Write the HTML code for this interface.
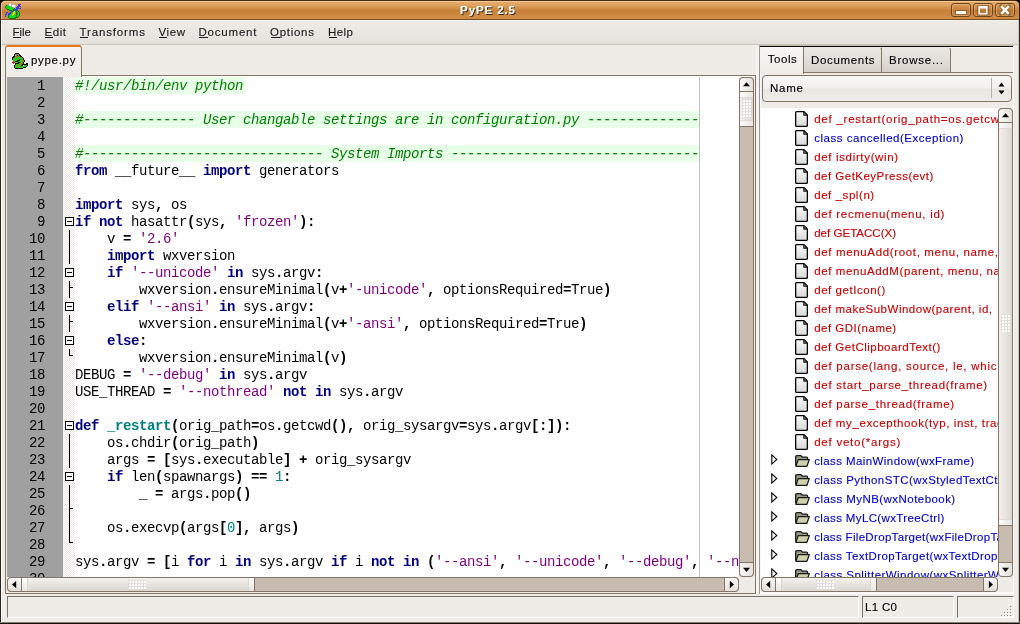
<!DOCTYPE html>
<html>
<head>
<meta charset="utf-8">
<title>PyPE 2.5</title>
<style>
html,body{margin:0;padding:0;}
body{width:1020px;height:624px;overflow:hidden;background:#efebe7;font-family:"Liberation Sans",sans-serif;font-size:12px;color:#000;position:relative;}
div,span,svg{box-sizing:border-box;}
.a{position:absolute;}
#win{position:absolute;left:0;top:0;width:1020px;height:624px;background:#efebe7;overflow:hidden;will-change:transform;}
#title{left:0;top:0;width:1020px;height:20px;background:linear-gradient(#4a3018 0px,#4a3018 1px,#f8cc98 1px,#f4c690 2px,#e3a867 2.2px,#e0a463 4.5px,#d5934c 8px,#c78139 10.5px,#c8833b 12.5px,#cf8a43 16px,#d38e46 18.4px,#b57a3a 19px,#7c5428 19px,#7c5428 20px);}
.wb{position:absolute;top:3px;width:20px;height:14px;border:1px solid #6f461c;border-radius:3px;background:linear-gradient(#dc9b5c,#c98540 45%,#bd7530 50%,#c88440);box-shadow:inset 0 0 0 1px rgba(255,225,190,.30);}
#menu{left:1px;top:20px;width:1018px;height:25px;background:linear-gradient(#f6f4f2 0,#eeebe7 1px,#eae7e3 50%,#e3dfdb 24px,#cdc4ba 24px,#cdc4ba 25px);}
.ul{position:absolute;height:1px;background:#1a1a1a;}
#ed{left:7px;top:77px;width:732px;height:500px;background:#fff;overflow:hidden;}
#gut{left:0;top:0;width:56px;height:500px;background:#a0a0a0;}
#fold{left:56px;top:0;width:12px;height:500px;background:conic-gradient(#ece8e3 25%,#fff 0 50%,#ece8e3 0 75%,#fff 0) 0 0/2px 2px;}
.cl{position:absolute;left:68px;height:17px;line-height:17px;white-space:pre;font-family:"Liberation Mono",monospace;font-size:14px;letter-spacing:-0.4016px;color:#000;}
.cb{position:absolute;left:68px;height:17px;background:#e8ffe8;}
.k{font-weight:bold;color:#00007f;}
.s{color:#7f007f;}
.n{color:#007f7f;}
.o{font-weight:bold;color:#000;}
.d{font-weight:bold;color:#007f7f;}
.c{color:#007f00;font-style:italic;}
#edge{left:692px;top:0;width:1px;height:500px;background:#c0c0c0;}
.sbb{position:absolute;width:14px;height:14px;border:1px solid #8b7b69;border-radius:3px;background:linear-gradient(#fbfaf9,#eeebe7 50%,#e2ded9);}
.tr{position:absolute;background:#c9bdb0;border:1px solid #8b7b69;}
.th{position:absolute;border:1px solid #8b7b69;background:#efebe7;}
.fo{position:absolute;background:#000;}
</style>
</head>
<body>
<div id="win">
<div id="title" class="a"></div>
<div class="a" style="left:460.10px;top:-0.5px;font-size:11.5px;line-height:20px;height:20px;letter-spacing:0.887px;color:#fff;-webkit-text-stroke:0.12px #fff;white-space:pre;font-weight:bold;text-shadow:1px 1px 0 #3c2812;">PyPE 2.5</div>
<div class="wb" style="left:951px"></div>
<div class="wb" style="left:973px"></div>
<div class="wb" style="left:995px"></div>
<div class="a" style="left:956px;top:11px;width:10px;height:3px;background:#fff;box-shadow:0 0 0 1px rgba(110,65,20,.4)"></div>
<svg class="a" style="left:977px;top:5px" width="12" height="11" viewBox="0 0 12 11"><rect x="1" y="1" width="10" height="9" fill="none" stroke="#6e4114" stroke-opacity=".4" stroke-width="3.6"/><path d="M1.4 1 H10.6 V9.6 H1.4 Z M3 3.6 V8 H9 V3.6 Z" fill="#fff" fill-rule="evenodd"/></svg>
<svg class="a" style="left:999px;top:4px" width="12" height="12" viewBox="0 0 12 12"><path d="M2 2 L10 10 M10 2 L2 10" stroke="#6e4114" stroke-opacity=".45" stroke-width="4.4" stroke-linecap="square"/><path d="M2.2 2.2 L9.8 9.8 M9.8 2.2 L2.2 9.8" stroke="#fff" stroke-width="2.6" stroke-linecap="butt"/></svg>
<svg class="a" style="left:5px;top:3px" width="16" height="16" viewBox="0 0 16 16" shape-rendering="crispEdges"><rect x="4" y="0" width="2" height="1" fill="#b8b8b8"/><rect x="3" y="1" width="1" height="1" fill="#b8b8b8"/><rect x="4" y="1" width="2" height="1" fill="#ffffff"/><rect x="6" y="1" width="1" height="1" fill="#b8b8b8"/><rect x="8" y="1" width="2" height="1" fill="#b8b8b8"/><rect x="13" y="1" width="3" height="1" fill="#3c3ce4"/><rect x="1" y="2" width="1" height="1" fill="#0a7a0a"/><rect x="2" y="2" width="2" height="1" fill="#10d810"/><rect x="4" y="2" width="2" height="1" fill="#ffffff"/><rect x="6" y="2" width="1" height="1" fill="#b8b8b8"/><rect x="7" y="2" width="3" height="1" fill="#ffffff"/><rect x="10" y="2" width="1" height="1" fill="#b8b8b8"/><rect x="13" y="2" width="2" height="1" fill="#3c3ce4"/><rect x="0" y="3" width="1" height="1" fill="#0a7a0a"/><rect x="1" y="3" width="4" height="1" fill="#10d810"/><rect x="5" y="3" width="2" height="1" fill="#b8b8b8"/><rect x="7" y="3" width="3" height="1" fill="#ffffff"/><rect x="10" y="3" width="1" height="1" fill="#b8b8b8"/><rect x="12" y="3" width="4" height="1" fill="#3c3ce4"/><rect x="0" y="4" width="1" height="1" fill="#0a7a0a"/><rect x="1" y="4" width="7" height="1" fill="#10d810"/><rect x="8" y="4" width="2" height="1" fill="#b8b8b8"/><rect x="11" y="4" width="3" height="1" fill="#3c3ce4"/><rect x="1" y="5" width="1" height="1" fill="#0a7a0a"/><rect x="2" y="5" width="7" height="1" fill="#10d810"/><rect x="9" y="5" width="1" height="1" fill="#0a7a0a"/><rect x="11" y="5" width="5" height="1" fill="#3c3ce4"/><rect x="2" y="6" width="2" height="1" fill="#0a7a0a"/><rect x="4" y="6" width="4" height="1" fill="#10d810"/><rect x="8" y="6" width="1" height="1" fill="#0a7a0a"/><rect x="9" y="6" width="4" height="1" fill="#3c3ce4"/><rect x="4" y="7" width="3" height="1" fill="#0a7a0a"/><rect x="7" y="7" width="1" height="1" fill="#10d810"/><rect x="8" y="7" width="2" height="1" fill="#3c3ce4"/><rect x="10" y="7" width="1" height="1" fill="#0a7a0a"/><rect x="11" y="7" width="1" height="1" fill="#3c3ce4"/><rect x="12" y="7" width="1" height="1" fill="#0a7a0a"/><rect x="6" y="8" width="2" height="1" fill="#3c3ce4"/><rect x="8" y="8" width="1" height="1" fill="#10d810"/><rect x="9" y="8" width="1" height="1" fill="#f4f000"/><rect x="10" y="8" width="1" height="1" fill="#10d810"/><rect x="11" y="8" width="1" height="1" fill="#0a7a0a"/><rect x="12" y="8" width="1" height="1" fill="#10d810"/><rect x="13" y="8" width="1" height="1" fill="#0a7a0a"/><rect x="1" y="9" width="2" height="1" fill="#3c3ce4"/><rect x="5" y="9" width="2" height="1" fill="#3c3ce4"/><rect x="7" y="9" width="1" height="1" fill="#10d810"/><rect x="8" y="9" width="2" height="1" fill="#f4f000"/><rect x="10" y="9" width="1" height="1" fill="#10d810"/><rect x="11" y="9" width="1" height="1" fill="#0a7a0a"/><rect x="12" y="9" width="1" height="1" fill="#8a5a28"/><rect x="13" y="9" width="1" height="1" fill="#10d810"/><rect x="14" y="9" width="1" height="1" fill="#0a7a0a"/><rect x="1" y="10" width="1" height="1" fill="#3c3ce4"/><rect x="2" y="10" width="1" height="1" fill="#7878ec"/><rect x="3" y="10" width="3" height="1" fill="#3c3ce4"/><rect x="6" y="10" width="2" height="1" fill="#10d810"/><rect x="8" y="10" width="2" height="1" fill="#f4f000"/><rect x="10" y="10" width="1" height="1" fill="#10d810"/><rect x="11" y="10" width="1" height="1" fill="#0a7a0a"/><rect x="12" y="10" width="1" height="1" fill="#8a5a28"/><rect x="13" y="10" width="1" height="1" fill="#10d810"/><rect x="14" y="10" width="1" height="1" fill="#0a7a0a"/><rect x="0" y="11" width="2" height="1" fill="#3c3ce4"/><rect x="3" y="11" width="2" height="1" fill="#3c3ce4"/><rect x="5" y="11" width="2" height="1" fill="#10d810"/><rect x="7" y="11" width="2" height="1" fill="#f4f000"/><rect x="9" y="11" width="2" height="1" fill="#10d810"/><rect x="11" y="11" width="1" height="1" fill="#0a7a0a"/><rect x="12" y="11" width="1" height="1" fill="#8a5a28"/><rect x="13" y="11" width="1" height="1" fill="#10d810"/><rect x="14" y="11" width="1" height="1" fill="#0a7a0a"/><rect x="0" y="12" width="1" height="1" fill="#3c3ce4"/><rect x="1" y="12" width="1" height="1" fill="#7878ec"/><rect x="3" y="12" width="1" height="1" fill="#3c3ce4"/><rect x="4" y="12" width="3" height="1" fill="#10d810"/><rect x="7" y="12" width="1" height="1" fill="#f4f000"/><rect x="8" y="12" width="3" height="1" fill="#10d810"/><rect x="11" y="12" width="1" height="1" fill="#0a7a0a"/><rect x="12" y="12" width="2" height="1" fill="#10d810"/><rect x="14" y="12" width="1" height="1" fill="#0a7a0a"/><rect x="0" y="13" width="1" height="1" fill="#3c3ce4"/><rect x="3" y="13" width="1" height="1" fill="#0a7a0a"/><rect x="4" y="13" width="7" height="1" fill="#10d810"/><rect x="11" y="13" width="1" height="1" fill="#0a7a0a"/><rect x="12" y="13" width="1" height="1" fill="#10d810"/><rect x="13" y="13" width="1" height="1" fill="#0a7a0a"/><rect x="3" y="14" width="1" height="1" fill="#0a7a0a"/><rect x="4" y="14" width="6" height="1" fill="#10d810"/><rect x="10" y="14" width="3" height="1" fill="#0a7a0a"/><rect x="4" y="15" width="7" height="1" fill="#0a7a0a"/></svg>
<div id="menu" class="a"></div>
<div class="a" style="left:12.50px;top:22.0px;font-size:11.5px;line-height:20px;height:20px;letter-spacing:-0.010px;color:#1a1a1a;-webkit-text-stroke:0.12px #1a1a1a;white-space:pre;">File</div>
<div class="ul" style="left:13.0px;top:37px;width:7.5px"></div>
<div class="a" style="left:44.50px;top:22.0px;font-size:11.5px;line-height:20px;height:20px;letter-spacing:0.557px;color:#1a1a1a;-webkit-text-stroke:0.12px #1a1a1a;white-space:pre;">Edit</div>
<div class="ul" style="left:45.0px;top:37px;width:8.2px"></div>
<div class="a" style="left:79.50px;top:22.0px;font-size:11.5px;line-height:20px;height:20px;letter-spacing:0.863px;color:#1a1a1a;-webkit-text-stroke:0.12px #1a1a1a;white-space:pre;">Transforms</div>
<div class="ul" style="left:80.0px;top:37px;width:7.5px"></div>
<div class="a" style="left:158.50px;top:22.0px;font-size:11.5px;line-height:20px;height:20px;letter-spacing:0.594px;color:#1a1a1a;-webkit-text-stroke:0.12px #1a1a1a;white-space:pre;">View</div>
<div class="ul" style="left:159.0px;top:37px;width:8.2px"></div>
<div class="a" style="left:198.50px;top:22.0px;font-size:11.5px;line-height:20px;height:20px;letter-spacing:0.797px;color:#1a1a1a;-webkit-text-stroke:0.12px #1a1a1a;white-space:pre;">Document</div>
<div class="ul" style="left:199.0px;top:37px;width:8.8px"></div>
<div class="a" style="left:270.00px;top:22.0px;font-size:11.5px;line-height:20px;height:20px;letter-spacing:0.727px;color:#1a1a1a;-webkit-text-stroke:0.12px #1a1a1a;white-space:pre;">Options</div>
<div class="ul" style="left:270.5px;top:37px;width:9.5px"></div>
<div class="a" style="left:328.00px;top:22.0px;font-size:11.5px;line-height:20px;height:20px;letter-spacing:0.448px;color:#1a1a1a;-webkit-text-stroke:0.12px #1a1a1a;white-space:pre;">Help</div>
<div class="ul" style="left:328.5px;top:37px;width:8.8px"></div>
<div class="a" style="left:1px;top:5px;width:1px;height:14px;background:#eebf8c"></div>
<div class="a" style="left:0;top:0;width:1px;height:624px;background:#2a241e"></div><div class="a" style="left:1px;top:20px;width:1px;height:602px;background:#fbfaf9"></div>
<div class="a" style="left:1019px;top:0;width:1px;height:624px;background:#2a241e"></div><div class="a" style="left:1018px;top:20px;width:1px;height:602px;background:#cfc9c1"></div>
<div class="a" style="left:0;top:622px;width:1020px;height:1px;background:#857e75"></div><div class="a" style="left:0;top:623px;width:1020px;height:1px;background:#14110e"></div>
<svg class="a" style="left:0;top:0" width="6" height="6" viewBox="0 0 6 6"><path d="M0 0 H5.2 L3.4 1 L2.2 2 L1.4 3 L1 4.2 V5.2 H0 Z" fill="#050403"/><path d="M5.2 1 L3.6 1.9 L2.4 3 L1.9 4.2 L1.9 5.5 L1.1 5.5 L1.1 4.2 L1.5 3 L2.3 2 L3.4 1 Z" fill="#f0c696"/></svg>
<svg class="a" style="left:1014px;top:0" width="6" height="6" viewBox="0 0 6 6"><g transform="translate(6,0) scale(-1,1)"><path d="M0 0 H5.2 L3.4 1 L2.2 2 L1.4 3 L1 4.2 V5.2 H0 Z" fill="#050403"/><path d="M5.2 1 L3.6 1.9 L2.4 3 L1.9 4.2 L1.9 5.5 L1.1 5.5 L1.1 4.2 L1.5 3 L2.3 2 L3.4 1 Z" fill="#d8a26a"/></g></svg>
<div class="a" style="left:5px;top:75px;width:751px;height:519px;border:1px solid #857563"></div>
<div class="a" style="left:6px;top:76px;width:749px;height:1px;background:#fff"></div>
<div class="a" style="left:5px;top:45px;width:77px;height:32px;border:1px solid #857563;border-bottom:none;border-radius:4px 4px 0 0;background:linear-gradient(#f6f4f2,#efebe7)"></div>
<div class="a" style="left:6px;top:45px;width:75px;height:2px;background:#e8771c;border-radius:3px 3px 0 0"></div>
<div class="a" style="left:30.90px;top:50.4px;font-size:11.5px;line-height:20px;height:20px;letter-spacing:0.720px;color:#000;-webkit-text-stroke:0.12px #000;white-space:pre;">pype.py</div>
<svg class="a" style="left:12px;top:53px" width="16" height="16" viewBox="0 0 16 16" shape-rendering="crispEdges"><rect x="3" y="0" width="4" height="1" fill="#0a0a0a"/><rect x="2" y="1" width="1" height="1" fill="#0a0a0a"/><rect x="3" y="1" width="4" height="1" fill="#8a8a18"/><rect x="7" y="1" width="1" height="1" fill="#0a0a0a"/><rect x="2" y="2" width="1" height="1" fill="#0a0a0a"/><rect x="3" y="2" width="1" height="1" fill="#9a9a9a"/><rect x="4" y="2" width="1" height="1" fill="#8a8a18"/><rect x="5" y="2" width="1" height="1" fill="#1818f0"/><rect x="6" y="2" width="1" height="1" fill="#8a8a18"/><rect x="7" y="2" width="2" height="1" fill="#0a0a0a"/><rect x="1" y="3" width="2" height="1" fill="#0a0a0a"/><rect x="3" y="3" width="5" height="1" fill="#8a8a18"/><rect x="8" y="3" width="2" height="1" fill="#0a0a0a"/><rect x="0" y="4" width="2" height="1" fill="#0a0a0a"/><rect x="2" y="4" width="4" height="1" fill="#8a8a18"/><rect x="6" y="4" width="2" height="1" fill="#18d418"/><rect x="8" y="4" width="2" height="1" fill="#8a8a18"/><rect x="10" y="4" width="1" height="1" fill="#0a0a0a"/><rect x="0" y="5" width="1" height="1" fill="#0a0a0a"/><rect x="1" y="5" width="8" height="1" fill="#18d418"/><rect x="9" y="5" width="2" height="1" fill="#8a8a18"/><rect x="11" y="5" width="1" height="1" fill="#0a0a0a"/><rect x="0" y="6" width="1" height="1" fill="#0a0a0a"/><rect x="1" y="6" width="6" height="1" fill="#18d418"/><rect x="7" y="6" width="1" height="1" fill="#0a0a0a"/><rect x="8" y="6" width="2" height="1" fill="#18d418"/><rect x="10" y="6" width="1" height="1" fill="#8a8a18"/><rect x="11" y="6" width="1" height="1" fill="#0a0a0a"/><rect x="1" y="7" width="4" height="1" fill="#18d418"/><rect x="5" y="7" width="3" height="1" fill="#0a0a0a"/><rect x="8" y="7" width="2" height="1" fill="#18d418"/><rect x="10" y="7" width="2" height="1" fill="#8a8a18"/><rect x="12" y="7" width="1" height="1" fill="#0a0a0a"/><rect x="1" y="8" width="1" height="1" fill="#f01010"/><rect x="2" y="8" width="1" height="1" fill="#18d418"/><rect x="3" y="8" width="3" height="1" fill="#0a0a0a"/><rect x="6" y="8" width="1" height="1" fill="#0f8a0f"/><rect x="7" y="8" width="2" height="1" fill="#18d418"/><rect x="9" y="8" width="3" height="1" fill="#8a8a18"/><rect x="12" y="8" width="1" height="1" fill="#0a0a0a"/><rect x="0" y="9" width="3" height="1" fill="#f01010"/><rect x="3" y="9" width="3" height="1" fill="#18d418"/><rect x="6" y="9" width="2" height="1" fill="#0a0a0a"/><rect x="8" y="9" width="1" height="1" fill="#18d418"/><rect x="9" y="9" width="2" height="1" fill="#8a8a18"/><rect x="11" y="9" width="1" height="1" fill="#0a0a0a"/><rect x="1" y="10" width="1" height="1" fill="#f01010"/><rect x="3" y="10" width="4" height="1" fill="#0a0a0a"/><rect x="7" y="10" width="1" height="1" fill="#18d418"/><rect x="8" y="10" width="3" height="1" fill="#8a8a18"/><rect x="11" y="10" width="1" height="1" fill="#0a0a0a"/><rect x="14" y="10" width="2" height="1" fill="#0a0a0a"/><rect x="3" y="11" width="1" height="1" fill="#0a0a0a"/><rect x="4" y="11" width="3" height="1" fill="#18d418"/><rect x="7" y="11" width="3" height="1" fill="#8a8a18"/><rect x="10" y="11" width="6" height="1" fill="#0a0a0a"/><rect x="2" y="12" width="1" height="1" fill="#0a0a0a"/><rect x="3" y="12" width="2" height="1" fill="#18d418"/><rect x="5" y="12" width="4" height="1" fill="#8a8a18"/><rect x="9" y="12" width="2" height="1" fill="#0a0a0a"/><rect x="12" y="12" width="1" height="1" fill="#8a8a18"/><rect x="13" y="12" width="2" height="1" fill="#18d418"/><rect x="15" y="12" width="1" height="1" fill="#0a0a0a"/><rect x="2" y="13" width="1" height="1" fill="#0a0a0a"/><rect x="3" y="13" width="1" height="1" fill="#18d418"/><rect x="4" y="13" width="2" height="1" fill="#8a8a18"/><rect x="6" y="13" width="2" height="1" fill="#18d418"/><rect x="8" y="13" width="2" height="1" fill="#8a8a18"/><rect x="10" y="13" width="4" height="1" fill="#18d418"/><rect x="14" y="13" width="1" height="1" fill="#0a0a0a"/><rect x="2" y="14" width="1" height="1" fill="#0a0a0a"/><rect x="3" y="14" width="8" height="1" fill="#18d418"/><rect x="11" y="14" width="3" height="1" fill="#0a0a0a"/><rect x="3" y="15" width="8" height="1" fill="#0a0a0a"/></svg>
<div id="ed" class="a">
<div id="gut" class="a"></div><div id="fold" class="a"></div>
<div class="cb" style="top:0px;width:170px"></div>
<div class="cb" style="top:34px;width:624px"></div>
<div class="cb" style="top:68px;width:624px"></div>
<div class="cl" style="left:30px;top:1px">1</div>
<div class="cl" style="top:1px"><span class="c">#!/usr/bin/env python</span></div>
<div class="cl" style="left:30px;top:18px">2</div>
<div class="cl" style="left:30px;top:35px">3</div>
<div class="cl" style="top:35px"><span class="c">#-------------- User changable settings are in configuration.py --------------</span></div>
<div class="cl" style="left:30px;top:52px">4</div>
<div class="cl" style="left:30px;top:69px">5</div>
<div class="cl" style="top:69px"><span class="c">#------------------------------ System Imports -------------------------------</span></div>
<div class="cl" style="left:30px;top:86px">6</div>
<div class="cl" style="top:86px"><span class="k">from</span> __future__ <span class="k">import</span> generators</div>
<div class="cl" style="left:30px;top:103px">7</div>
<div class="cl" style="left:30px;top:120px">8</div>
<div class="cl" style="top:120px"><span class="k">import</span> sys<span class="o">,</span> os</div>
<div class="cl" style="left:30px;top:137px">9</div>
<div class="cl" style="top:137px"><span class="k">if</span> <span class="k">not</span> hasattr<span class="o">(</span>sys<span class="o">,</span> <span class="s">'frozen'</span><span class="o">):</span></div>
<div class="cl" style="left:22px;top:154px">10</div>
<div class="cl" style="top:154px">    v <span class="o">=</span> <span class="s">'2.6'</span></div>
<div class="cl" style="left:22px;top:171px">11</div>
<div class="cl" style="top:171px">    <span class="k">import</span> wxversion</div>
<div class="cl" style="left:22px;top:188px">12</div>
<div class="cl" style="top:188px">    <span class="k">if</span> <span class="s">'--unicode'</span> <span class="k">in</span> sys<span class="o">.</span>argv<span class="o">:</span></div>
<div class="cl" style="left:22px;top:205px">13</div>
<div class="cl" style="top:205px">        wxversion<span class="o">.</span>ensureMinimal<span class="o">(</span>v<span class="o">+</span><span class="s">'-unicode'</span><span class="o">,</span> optionsRequired<span class="o">=</span>True<span class="o">)</span></div>
<div class="cl" style="left:22px;top:222px">14</div>
<div class="cl" style="top:222px">    <span class="k">elif</span> <span class="s">'--ansi'</span> <span class="k">in</span> sys<span class="o">.</span>argv<span class="o">:</span></div>
<div class="cl" style="left:22px;top:239px">15</div>
<div class="cl" style="top:239px">        wxversion<span class="o">.</span>ensureMinimal<span class="o">(</span>v<span class="o">+</span><span class="s">'-ansi'</span><span class="o">,</span> optionsRequired<span class="o">=</span>True<span class="o">)</span></div>
<div class="cl" style="left:22px;top:256px">16</div>
<div class="cl" style="top:256px">    <span class="k">else</span><span class="o">:</span></div>
<div class="cl" style="left:22px;top:273px">17</div>
<div class="cl" style="top:273px">        wxversion<span class="o">.</span>ensureMinimal<span class="o">(</span>v<span class="o">)</span></div>
<div class="cl" style="left:22px;top:290px">18</div>
<div class="cl" style="top:290px">DEBUG <span class="o">=</span> <span class="s">'--debug'</span> <span class="k">in</span> sys<span class="o">.</span>argv</div>
<div class="cl" style="left:22px;top:307px">19</div>
<div class="cl" style="top:307px">USE_THREAD <span class="o">=</span> <span class="s">'--nothread'</span> <span class="k">not</span> <span class="k">in</span> sys<span class="o">.</span>argv</div>
<div class="cl" style="left:22px;top:324px">20</div>
<div class="cl" style="left:22px;top:341px">21</div>
<div class="cl" style="top:341px"><span class="k">def</span> <span class="d">_restart</span><span class="o">(</span>orig_path<span class="o">=</span>os<span class="o">.</span>getcwd<span class="o">(),</span> orig_sysargv<span class="o">=</span>sys<span class="o">.</span>argv<span class="o">[:]):</span></div>
<div class="cl" style="left:22px;top:358px">22</div>
<div class="cl" style="top:358px">    os<span class="o">.</span>chdir<span class="o">(</span>orig_path<span class="o">)</span></div>
<div class="cl" style="left:22px;top:375px">23</div>
<div class="cl" style="top:375px">    args <span class="o">=</span> <span class="o">[</span>sys<span class="o">.</span>executable<span class="o">]</span> <span class="o">+</span> orig_sysargv</div>
<div class="cl" style="left:22px;top:392px">24</div>
<div class="cl" style="top:392px">    <span class="k">if</span> len<span class="o">(</span>spawnargs<span class="o">)</span> <span class="o">==</span> <span class="n">1</span><span class="o">:</span></div>
<div class="cl" style="left:22px;top:409px">25</div>
<div class="cl" style="top:409px">        _ <span class="o">=</span> args<span class="o">.</span>pop<span class="o">()</span></div>
<div class="cl" style="left:22px;top:426px">26</div>
<div class="cl" style="left:22px;top:443px">27</div>
<div class="cl" style="top:443px">    os<span class="o">.</span>execvp<span class="o">(</span>args<span class="o">[</span><span class="n">0</span><span class="o">],</span> args<span class="o">)</span></div>
<div class="cl" style="left:22px;top:460px">28</div>
<div class="cl" style="left:22px;top:477px">29</div>
<div class="cl" style="top:477px">sys<span class="o">.</span>argv <span class="o">=</span> <span class="o">[</span>i <span class="k">for</span> i <span class="k">in</span> sys<span class="o">.</span>argv <span class="k">if</span> i <span class="k">not</span> <span class="k">in</span> <span class="o">(</span><span class="s">'--ansi'</span><span class="o">,</span> <span class="s">'--unicode'</span><span class="o">,</span> <span class="s">'--debug'</span><span class="o">,</span> <span class="s">'--nothread'</span><span class="o">)]</span></div>
<div class="cl" style="left:22px;top:494px">30</div>
<div id="edge" class="a"></div>
<div class="fo" style="left:58px;top:140px;width:9px;height:9px;border:1px solid #000;background:#fff"></div><div class="fo" style="left:60px;top:144px;width:5px;height:1px"></div>
<div class="fo" style="left:58px;top:191px;width:9px;height:9px;border:1px solid #000;background:#fff"></div><div class="fo" style="left:60px;top:195px;width:5px;height:1px"></div>
<div class="fo" style="left:58px;top:225px;width:9px;height:9px;border:1px solid #000;background:#fff"></div><div class="fo" style="left:60px;top:229px;width:5px;height:1px"></div>
<div class="fo" style="left:58px;top:259px;width:9px;height:9px;border:1px solid #000;background:#fff"></div><div class="fo" style="left:60px;top:263px;width:5px;height:1px"></div>
<div class="fo" style="left:58px;top:344px;width:9px;height:9px;border:1px solid #000;background:#fff"></div><div class="fo" style="left:60px;top:348px;width:5px;height:1px"></div>
<div class="fo" style="left:58px;top:395px;width:9px;height:9px;border:1px solid #000;background:#fff"></div><div class="fo" style="left:60px;top:399px;width:5px;height:1px"></div>
<div class="fo" style="left:62px;top:153px;width:1px;height:17px"></div>
<div class="fo" style="left:62px;top:170px;width:1px;height:17px"></div>
<div class="fo" style="left:62px;top:357px;width:1px;height:17px"></div>
<div class="fo" style="left:62px;top:374px;width:1px;height:17px"></div>
<div class="fo" style="left:62px;top:408px;width:1px;height:17px"></div>
<div class="fo" style="left:62px;top:442px;width:1px;height:17px"></div>
<div class="fo" style="left:62px;top:204px;width:1px;height:17px"></div><div class="fo" style="left:62px;top:210px;width:4px;height:1px"></div>
<div class="fo" style="left:62px;top:238px;width:1px;height:17px"></div><div class="fo" style="left:62px;top:244px;width:4px;height:1px"></div>
<div class="fo" style="left:62px;top:425px;width:1px;height:17px"></div><div class="fo" style="left:62px;top:431px;width:4px;height:1px"></div>
<div class="fo" style="left:62px;top:272px;width:1px;height:7px"></div><div class="fo" style="left:62px;top:278px;width:4px;height:1px"></div>
<div class="fo" style="left:62px;top:459px;width:1px;height:7px"></div><div class="fo" style="left:62px;top:465px;width:4px;height:1px"></div>
</div>
<div class="a" style="left:739px;top:77px;width:15px;height:500px;background:#c8bcb0;border:1px solid #85766a;border-radius:4px"></div><div class="a" style="left:739px;top:91px;width:15px;height:36px;border:1px solid #85766a;background:linear-gradient(90deg,#ffffff,#f3f1ee 50%,#e9e6e2)"></div><div class="a" style="left:740px;top:97px;width:13px;height:24px;background:linear-gradient(90deg,#f3f1ee,#e6e2dd 55%,#dcd7d1);border-top:1px solid #dcd7d1;border-bottom:1px solid #dcd7d1"></div><div class="a" style="left:743px;top:100px;width:2px;height:2px;background:#fdfcfc;box-shadow:-1px -1px 0 #dfdad4"></div><div class="a" style="left:746px;top:100px;width:2px;height:2px;background:#fdfcfc;box-shadow:-1px -1px 0 #dfdad4"></div><div class="a" style="left:749px;top:100px;width:2px;height:2px;background:#fdfcfc;box-shadow:-1px -1px 0 #dfdad4"></div><div class="a" style="left:743px;top:103px;width:2px;height:2px;background:#fdfcfc;box-shadow:-1px -1px 0 #dfdad4"></div><div class="a" style="left:746px;top:103px;width:2px;height:2px;background:#fdfcfc;box-shadow:-1px -1px 0 #dfdad4"></div><div class="a" style="left:749px;top:103px;width:2px;height:2px;background:#fdfcfc;box-shadow:-1px -1px 0 #dfdad4"></div><div class="a" style="left:743px;top:106px;width:2px;height:2px;background:#fdfcfc;box-shadow:-1px -1px 0 #dfdad4"></div><div class="a" style="left:746px;top:106px;width:2px;height:2px;background:#fdfcfc;box-shadow:-1px -1px 0 #dfdad4"></div><div class="a" style="left:749px;top:106px;width:2px;height:2px;background:#fdfcfc;box-shadow:-1px -1px 0 #dfdad4"></div><div class="a" style="left:743px;top:109px;width:2px;height:2px;background:#fdfcfc;box-shadow:-1px -1px 0 #dfdad4"></div><div class="a" style="left:746px;top:109px;width:2px;height:2px;background:#fdfcfc;box-shadow:-1px -1px 0 #dfdad4"></div><div class="a" style="left:749px;top:109px;width:2px;height:2px;background:#fdfcfc;box-shadow:-1px -1px 0 #dfdad4"></div><div class="a" style="left:743px;top:112px;width:2px;height:2px;background:#fdfcfc;box-shadow:-1px -1px 0 #dfdad4"></div><div class="a" style="left:746px;top:112px;width:2px;height:2px;background:#fdfcfc;box-shadow:-1px -1px 0 #dfdad4"></div><div class="a" style="left:749px;top:112px;width:2px;height:2px;background:#fdfcfc;box-shadow:-1px -1px 0 #dfdad4"></div><div class="a" style="left:743px;top:115px;width:2px;height:2px;background:#fdfcfc;box-shadow:-1px -1px 0 #dfdad4"></div><div class="a" style="left:746px;top:115px;width:2px;height:2px;background:#fdfcfc;box-shadow:-1px -1px 0 #dfdad4"></div><div class="a" style="left:749px;top:115px;width:2px;height:2px;background:#fdfcfc;box-shadow:-1px -1px 0 #dfdad4"></div><div class="a" style="left:739px;top:77px;width:15px;height:15px;border:1px solid #85766a;border-radius:4px 4px 0 0;background:linear-gradient(90deg,#fbfaf9,#efece8 50%,#e4e0db)"><svg class="a" style="left:0;top:0" width="13" height="13" viewBox="0 0 13 13"><polygon points="3,8.2 10,8.2 6.5,4.2" fill="#000"/></svg></div><div class="a" style="left:739px;top:562px;width:15px;height:15px;border:1px solid #85766a;border-radius:0 0 4px 4px;background:linear-gradient(90deg,#fbfaf9,#efece8 50%,#e4e0db)"><svg class="a" style="left:0;top:0" width="13" height="13" viewBox="0 0 13 13"><polygon points="3,4.8 10,4.8 6.5,9" fill="#000"/></svg></div>
<div class="a" style="left:7px;top:577px;width:732px;height:15px;background:#c8bcb0;border:1px solid #85766a;border-radius:4px"></div><div class="a" style="left:21px;top:577px;width:234px;height:15px;border:1px solid #85766a;background:linear-gradient(#ffffff,#f3f1ee 50%,#e9e6e2)"></div><div class="a" style="left:27px;top:578px;width:222px;height:13px;background:linear-gradient(#f3f1ee,#e6e2dd 55%,#dcd7d1);border-left:1px solid #dcd7d1;border-right:1px solid #dcd7d1"></div><div class="a" style="left:129px;top:581px;width:2px;height:2px;background:#fdfcfc;box-shadow:-1px -1px 0 #dfdad4"></div><div class="a" style="left:132px;top:581px;width:2px;height:2px;background:#fdfcfc;box-shadow:-1px -1px 0 #dfdad4"></div><div class="a" style="left:135px;top:581px;width:2px;height:2px;background:#fdfcfc;box-shadow:-1px -1px 0 #dfdad4"></div><div class="a" style="left:138px;top:581px;width:2px;height:2px;background:#fdfcfc;box-shadow:-1px -1px 0 #dfdad4"></div><div class="a" style="left:141px;top:581px;width:2px;height:2px;background:#fdfcfc;box-shadow:-1px -1px 0 #dfdad4"></div><div class="a" style="left:144px;top:581px;width:2px;height:2px;background:#fdfcfc;box-shadow:-1px -1px 0 #dfdad4"></div><div class="a" style="left:129px;top:584px;width:2px;height:2px;background:#fdfcfc;box-shadow:-1px -1px 0 #dfdad4"></div><div class="a" style="left:132px;top:584px;width:2px;height:2px;background:#fdfcfc;box-shadow:-1px -1px 0 #dfdad4"></div><div class="a" style="left:135px;top:584px;width:2px;height:2px;background:#fdfcfc;box-shadow:-1px -1px 0 #dfdad4"></div><div class="a" style="left:138px;top:584px;width:2px;height:2px;background:#fdfcfc;box-shadow:-1px -1px 0 #dfdad4"></div><div class="a" style="left:141px;top:584px;width:2px;height:2px;background:#fdfcfc;box-shadow:-1px -1px 0 #dfdad4"></div><div class="a" style="left:144px;top:584px;width:2px;height:2px;background:#fdfcfc;box-shadow:-1px -1px 0 #dfdad4"></div><div class="a" style="left:129px;top:587px;width:2px;height:2px;background:#fdfcfc;box-shadow:-1px -1px 0 #dfdad4"></div><div class="a" style="left:132px;top:587px;width:2px;height:2px;background:#fdfcfc;box-shadow:-1px -1px 0 #dfdad4"></div><div class="a" style="left:135px;top:587px;width:2px;height:2px;background:#fdfcfc;box-shadow:-1px -1px 0 #dfdad4"></div><div class="a" style="left:138px;top:587px;width:2px;height:2px;background:#fdfcfc;box-shadow:-1px -1px 0 #dfdad4"></div><div class="a" style="left:141px;top:587px;width:2px;height:2px;background:#fdfcfc;box-shadow:-1px -1px 0 #dfdad4"></div><div class="a" style="left:144px;top:587px;width:2px;height:2px;background:#fdfcfc;box-shadow:-1px -1px 0 #dfdad4"></div><div class="a" style="left:7px;top:577px;width:15px;height:15px;border:1px solid #85766a;border-radius:4px 0 0 4px;background:linear-gradient(#fbfaf9,#efece8 50%,#e4e0db)"><svg class="a" style="left:0;top:0" width="13" height="13" viewBox="0 0 13 13"><polygon points="8.2,2.8 8.2,10.2 4,6.5" fill="#000"/></svg></div><div class="a" style="left:724px;top:577px;width:15px;height:15px;border:1px solid #85766a;border-radius:0 4px 4px 0;background:linear-gradient(#fbfaf9,#efece8 50%,#e4e0db)"><svg class="a" style="left:0;top:0" width="13" height="13" viewBox="0 0 13 13"><polygon points="4.8,2.8 4.8,10.2 9,6.5" fill="#000"/></svg></div>
<div class="a" style="left:759px;top:45px;width:255px;height:1px;background:#c4b9ac"></div>
<div class="a" style="left:760px;top:46px;width:253px;height:1px;background:#0c0a08"></div>
<div class="a" style="left:760px;top:47px;width:253px;height:1px;background:#fbfaf9"></div>
<div class="a" style="left:756px;top:46px;width:3px;height:548px;background:#f5f3f0"></div>
<div class="a" style="left:759px;top:45px;width:1px;height:549px;background:#989694"></div>
<div class="a" style="left:760px;top:47px;width:1px;height:547px;background:#f9f8f7"></div>
<div class="a" style="left:1013px;top:47px;width:1px;height:547px;background:#fbfaf9"></div>
<div class="a" style="left:760px;top:592px;width:254px;height:2px;background:#fbfaf9"></div>
<div class="a" style="left:760px;top:72px;width:253px;height:1px;background:#857563"></div>
<div class="a" style="left:803px;top:47px;width:79px;height:26px;border:1px solid #857563;border-top:1px solid #e9e6e2;border-radius:0 3px 0 0;background:linear-gradient(#e9e6e2,#e2ded9 50%,#d5d0ca)"></div>
<div class="a" style="left:881px;top:47px;width:70px;height:26px;border:1px solid #857563;border-top:1px solid #e9e6e2;border-radius:0 3px 0 0;background:linear-gradient(#e9e6e2,#e2ded9 50%,#d5d0ca)"></div>
<div class="a" style="left:760px;top:47px;width:44px;height:27px;border-right:1px solid #857563;background:linear-gradient(#f8f7f5,#efebe7)"></div>
<div class="a" style="left:767.70px;top:49.0px;font-size:11.5px;line-height:20px;height:20px;letter-spacing:0.560px;color:#000;-webkit-text-stroke:0.12px #000;white-space:pre;">Tools</div>
<div class="a" style="left:810.90px;top:50.0px;font-size:11.5px;line-height:20px;height:20px;letter-spacing:0.691px;color:#000;-webkit-text-stroke:0.12px #000;white-space:pre;">Documents</div>
<div class="a" style="left:889.10px;top:50.0px;font-size:11.5px;line-height:20px;height:20px;letter-spacing:0.745px;color:#000;-webkit-text-stroke:0.12px #000;white-space:pre;">Browse...</div>
<div class="a" style="left:762px;top:75px;width:250px;height:27px;border:1px solid #857563;border-radius:4px;background:linear-gradient(#f8f7f5,#f3f1ee 48%,#e9e6e2 52%,#f0ede9)"></div>
<div class="a" style="left:769.90px;top:78.0px;font-size:11.5px;line-height:20px;height:20px;letter-spacing:0.771px;color:#000;-webkit-text-stroke:0.12px #000;white-space:pre;">Name</div>
<div class="a" style="left:991px;top:78px;width:1px;height:20px;background:#b9b0a5"></div>
<svg class="a" style="left:997px;top:80.5px" width="10" height="15" viewBox="0 0 10 15"><polygon points="1.5,5.5 7.5,5.5 4.5,1.5" fill="#000"/><polygon points="1.5,9.5 7.5,9.5 4.5,13.5" fill="#000"/></svg>
<div class="a" id="tree" style="left:761px;top:108px;width:237px;height:469px;background:#fff;overflow:hidden">
<svg class="a" style="left:34px;top:3px" width="13" height="16" viewBox="0 0 13 16"><defs><linearGradient id="fg0" x1="0" y1="0" x2="0" y2="1"><stop offset="0" stop-color="#fafafa"/><stop offset="1" stop-color="#d8d8d8"/></linearGradient></defs><path d="M1.6 .65 H9 L12.35 4 V14.4 Q12.35 15.35 11.4 15.35 H1.6 Q.65 15.35 .65 14.4 V1.6 Q.65 .65 1.6 .65 Z" fill="url(#fg0)" stroke="#000" stroke-width="1.3"/><path d="M8.6 1 V4.4 H12 Z" fill="#555" stroke="#222" stroke-width=".8" stroke-linejoin="round"/></svg>
<div class="a" style="left:53.20px;top:1.0px;font-size:11.5px;line-height:20px;height:20px;letter-spacing:0.758px;color:#c80000;-webkit-text-stroke:0.12px #c80000;white-space:pre;">def _restart(orig_path=os.getcwd(), orig_sysargv</div>
<svg class="a" style="left:34px;top:22px" width="13" height="16" viewBox="0 0 13 16"><defs><linearGradient id="fg1" x1="0" y1="0" x2="0" y2="1"><stop offset="0" stop-color="#fafafa"/><stop offset="1" stop-color="#d8d8d8"/></linearGradient></defs><path d="M1.6 .65 H9 L12.35 4 V14.4 Q12.35 15.35 11.4 15.35 H1.6 Q.65 15.35 .65 14.4 V1.6 Q.65 .65 1.6 .65 Z" fill="url(#fg1)" stroke="#000" stroke-width="1.3"/><path d="M8.6 1 V4.4 H12 Z" fill="#555" stroke="#222" stroke-width=".8" stroke-linejoin="round"/></svg>
<div class="a" style="left:53.20px;top:20.0px;font-size:11.5px;line-height:20px;height:20px;letter-spacing:0.522px;color:#0000c8;-webkit-text-stroke:0.12px #0000c8;white-space:pre;">class cancelled(Exception)</div>
<svg class="a" style="left:34px;top:41px" width="13" height="16" viewBox="0 0 13 16"><defs><linearGradient id="fg2" x1="0" y1="0" x2="0" y2="1"><stop offset="0" stop-color="#fafafa"/><stop offset="1" stop-color="#d8d8d8"/></linearGradient></defs><path d="M1.6 .65 H9 L12.35 4 V14.4 Q12.35 15.35 11.4 15.35 H1.6 Q.65 15.35 .65 14.4 V1.6 Q.65 .65 1.6 .65 Z" fill="url(#fg2)" stroke="#000" stroke-width="1.3"/><path d="M8.6 1 V4.4 H12 Z" fill="#555" stroke="#222" stroke-width=".8" stroke-linejoin="round"/></svg>
<div class="a" style="left:53.20px;top:39.0px;font-size:11.5px;line-height:20px;height:20px;letter-spacing:0.657px;color:#c80000;-webkit-text-stroke:0.12px #c80000;white-space:pre;">def isdirty(win)</div>
<svg class="a" style="left:34px;top:60px" width="13" height="16" viewBox="0 0 13 16"><defs><linearGradient id="fg3" x1="0" y1="0" x2="0" y2="1"><stop offset="0" stop-color="#fafafa"/><stop offset="1" stop-color="#d8d8d8"/></linearGradient></defs><path d="M1.6 .65 H9 L12.35 4 V14.4 Q12.35 15.35 11.4 15.35 H1.6 Q.65 15.35 .65 14.4 V1.6 Q.65 .65 1.6 .65 Z" fill="url(#fg3)" stroke="#000" stroke-width="1.3"/><path d="M8.6 1 V4.4 H12 Z" fill="#555" stroke="#222" stroke-width=".8" stroke-linejoin="round"/></svg>
<div class="a" style="left:53.20px;top:58.0px;font-size:11.5px;line-height:20px;height:20px;letter-spacing:0.487px;color:#c80000;-webkit-text-stroke:0.12px #c80000;white-space:pre;">def GetKeyPress(evt)</div>
<svg class="a" style="left:34px;top:79px" width="13" height="16" viewBox="0 0 13 16"><defs><linearGradient id="fg4" x1="0" y1="0" x2="0" y2="1"><stop offset="0" stop-color="#fafafa"/><stop offset="1" stop-color="#d8d8d8"/></linearGradient></defs><path d="M1.6 .65 H9 L12.35 4 V14.4 Q12.35 15.35 11.4 15.35 H1.6 Q.65 15.35 .65 14.4 V1.6 Q.65 .65 1.6 .65 Z" fill="url(#fg4)" stroke="#000" stroke-width="1.3"/><path d="M8.6 1 V4.4 H12 Z" fill="#555" stroke="#222" stroke-width=".8" stroke-linejoin="round"/></svg>
<div class="a" style="left:53.20px;top:77.0px;font-size:11.5px;line-height:20px;height:20px;letter-spacing:0.566px;color:#c80000;-webkit-text-stroke:0.12px #c80000;white-space:pre;">def _spl(n)</div>
<svg class="a" style="left:34px;top:98px" width="13" height="16" viewBox="0 0 13 16"><defs><linearGradient id="fg5" x1="0" y1="0" x2="0" y2="1"><stop offset="0" stop-color="#fafafa"/><stop offset="1" stop-color="#d8d8d8"/></linearGradient></defs><path d="M1.6 .65 H9 L12.35 4 V14.4 Q12.35 15.35 11.4 15.35 H1.6 Q.65 15.35 .65 14.4 V1.6 Q.65 .65 1.6 .65 Z" fill="url(#fg5)" stroke="#000" stroke-width="1.3"/><path d="M8.6 1 V4.4 H12 Z" fill="#555" stroke="#222" stroke-width=".8" stroke-linejoin="round"/></svg>
<div class="a" style="left:53.20px;top:96.0px;font-size:11.5px;line-height:20px;height:20px;letter-spacing:0.725px;color:#c80000;-webkit-text-stroke:0.12px #c80000;white-space:pre;">def recmenu(menu, id)</div>
<svg class="a" style="left:34px;top:117px" width="13" height="16" viewBox="0 0 13 16"><defs><linearGradient id="fg6" x1="0" y1="0" x2="0" y2="1"><stop offset="0" stop-color="#fafafa"/><stop offset="1" stop-color="#d8d8d8"/></linearGradient></defs><path d="M1.6 .65 H9 L12.35 4 V14.4 Q12.35 15.35 11.4 15.35 H1.6 Q.65 15.35 .65 14.4 V1.6 Q.65 .65 1.6 .65 Z" fill="url(#fg6)" stroke="#000" stroke-width="1.3"/><path d="M8.6 1 V4.4 H12 Z" fill="#555" stroke="#222" stroke-width=".8" stroke-linejoin="round"/></svg>
<div class="a" style="left:53.20px;top:115.0px;font-size:11.5px;line-height:20px;height:20px;letter-spacing:0.027px;color:#c80000;-webkit-text-stroke:0.12px #c80000;white-space:pre;">def GETACC(X)</div>
<svg class="a" style="left:34px;top:136px" width="13" height="16" viewBox="0 0 13 16"><defs><linearGradient id="fg7" x1="0" y1="0" x2="0" y2="1"><stop offset="0" stop-color="#fafafa"/><stop offset="1" stop-color="#d8d8d8"/></linearGradient></defs><path d="M1.6 .65 H9 L12.35 4 V14.4 Q12.35 15.35 11.4 15.35 H1.6 Q.65 15.35 .65 14.4 V1.6 Q.65 .65 1.6 .65 Z" fill="url(#fg7)" stroke="#000" stroke-width="1.3"/><path d="M8.6 1 V4.4 H12 Z" fill="#555" stroke="#222" stroke-width=".8" stroke-linejoin="round"/></svg>
<div class="a" style="left:53.20px;top:134.0px;font-size:11.5px;line-height:20px;height:20px;letter-spacing:0.651px;color:#c80000;-webkit-text-stroke:0.12px #c80000;white-space:pre;">def menuAdd(root, menu, name, desc, funct</div>
<svg class="a" style="left:34px;top:155px" width="13" height="16" viewBox="0 0 13 16"><defs><linearGradient id="fg8" x1="0" y1="0" x2="0" y2="1"><stop offset="0" stop-color="#fafafa"/><stop offset="1" stop-color="#d8d8d8"/></linearGradient></defs><path d="M1.6 .65 H9 L12.35 4 V14.4 Q12.35 15.35 11.4 15.35 H1.6 Q.65 15.35 .65 14.4 V1.6 Q.65 .65 1.6 .65 Z" fill="url(#fg8)" stroke="#000" stroke-width="1.3"/><path d="M8.6 1 V4.4 H12 Z" fill="#555" stroke="#222" stroke-width=".8" stroke-linejoin="round"/></svg>
<div class="a" style="left:53.20px;top:153.0px;font-size:11.5px;line-height:20px;height:20px;letter-spacing:0.608px;color:#c80000;-webkit-text-stroke:0.12px #c80000;white-space:pre;">def menuAddM(parent, menu, name, help)</div>
<svg class="a" style="left:34px;top:174px" width="13" height="16" viewBox="0 0 13 16"><defs><linearGradient id="fg9" x1="0" y1="0" x2="0" y2="1"><stop offset="0" stop-color="#fafafa"/><stop offset="1" stop-color="#d8d8d8"/></linearGradient></defs><path d="M1.6 .65 H9 L12.35 4 V14.4 Q12.35 15.35 11.4 15.35 H1.6 Q.65 15.35 .65 14.4 V1.6 Q.65 .65 1.6 .65 Z" fill="url(#fg9)" stroke="#000" stroke-width="1.3"/><path d="M8.6 1 V4.4 H12 Z" fill="#555" stroke="#222" stroke-width=".8" stroke-linejoin="round"/></svg>
<div class="a" style="left:53.20px;top:172.0px;font-size:11.5px;line-height:20px;height:20px;letter-spacing:0.543px;color:#c80000;-webkit-text-stroke:0.12px #c80000;white-space:pre;">def getIcon()</div>
<svg class="a" style="left:34px;top:193px" width="13" height="16" viewBox="0 0 13 16"><defs><linearGradient id="fg10" x1="0" y1="0" x2="0" y2="1"><stop offset="0" stop-color="#fafafa"/><stop offset="1" stop-color="#d8d8d8"/></linearGradient></defs><path d="M1.6 .65 H9 L12.35 4 V14.4 Q12.35 15.35 11.4 15.35 H1.6 Q.65 15.35 .65 14.4 V1.6 Q.65 .65 1.6 .65 Z" fill="url(#fg10)" stroke="#000" stroke-width="1.3"/><path d="M8.6 1 V4.4 H12 Z" fill="#555" stroke="#222" stroke-width=".8" stroke-linejoin="round"/></svg>
<div class="a" style="left:53.20px;top:191.0px;font-size:11.5px;line-height:20px;height:20px;letter-spacing:0.506px;color:#c80000;-webkit-text-stroke:0.12px #c80000;white-space:pre;">def makeSubWindow(parent, id,</div>
<svg class="a" style="left:34px;top:212px" width="13" height="16" viewBox="0 0 13 16"><defs><linearGradient id="fg11" x1="0" y1="0" x2="0" y2="1"><stop offset="0" stop-color="#fafafa"/><stop offset="1" stop-color="#d8d8d8"/></linearGradient></defs><path d="M1.6 .65 H9 L12.35 4 V14.4 Q12.35 15.35 11.4 15.35 H1.6 Q.65 15.35 .65 14.4 V1.6 Q.65 .65 1.6 .65 Z" fill="url(#fg11)" stroke="#000" stroke-width="1.3"/><path d="M8.6 1 V4.4 H12 Z" fill="#555" stroke="#222" stroke-width=".8" stroke-linejoin="round"/></svg>
<div class="a" style="left:53.20px;top:210.0px;font-size:11.5px;line-height:20px;height:20px;letter-spacing:0.495px;color:#c80000;-webkit-text-stroke:0.12px #c80000;white-space:pre;">def GDI(name)</div>
<svg class="a" style="left:34px;top:231px" width="13" height="16" viewBox="0 0 13 16"><defs><linearGradient id="fg12" x1="0" y1="0" x2="0" y2="1"><stop offset="0" stop-color="#fafafa"/><stop offset="1" stop-color="#d8d8d8"/></linearGradient></defs><path d="M1.6 .65 H9 L12.35 4 V14.4 Q12.35 15.35 11.4 15.35 H1.6 Q.65 15.35 .65 14.4 V1.6 Q.65 .65 1.6 .65 Z" fill="url(#fg12)" stroke="#000" stroke-width="1.3"/><path d="M8.6 1 V4.4 H12 Z" fill="#555" stroke="#222" stroke-width=".8" stroke-linejoin="round"/></svg>
<div class="a" style="left:53.20px;top:229.0px;font-size:11.5px;line-height:20px;height:20px;letter-spacing:0.500px;color:#c80000;-webkit-text-stroke:0.12px #c80000;white-space:pre;">def GetClipboardText()</div>
<svg class="a" style="left:34px;top:250px" width="13" height="16" viewBox="0 0 13 16"><defs><linearGradient id="fg13" x1="0" y1="0" x2="0" y2="1"><stop offset="0" stop-color="#fafafa"/><stop offset="1" stop-color="#d8d8d8"/></linearGradient></defs><path d="M1.6 .65 H9 L12.35 4 V14.4 Q12.35 15.35 11.4 15.35 H1.6 Q.65 15.35 .65 14.4 V1.6 Q.65 .65 1.6 .65 Z" fill="url(#fg13)" stroke="#000" stroke-width="1.3"/><path d="M8.6 1 V4.4 H12 Z" fill="#555" stroke="#222" stroke-width=".8" stroke-linejoin="round"/></svg>
<div class="a" style="left:53.20px;top:248.0px;font-size:11.5px;line-height:20px;height:20px;letter-spacing:0.746px;color:#c80000;-webkit-text-stroke:0.12px #c80000;white-space:pre;">def parse(lang, source, le, which, x)</div>
<svg class="a" style="left:34px;top:269px" width="13" height="16" viewBox="0 0 13 16"><defs><linearGradient id="fg14" x1="0" y1="0" x2="0" y2="1"><stop offset="0" stop-color="#fafafa"/><stop offset="1" stop-color="#d8d8d8"/></linearGradient></defs><path d="M1.6 .65 H9 L12.35 4 V14.4 Q12.35 15.35 11.4 15.35 H1.6 Q.65 15.35 .65 14.4 V1.6 Q.65 .65 1.6 .65 Z" fill="url(#fg14)" stroke="#000" stroke-width="1.3"/><path d="M8.6 1 V4.4 H12 Z" fill="#555" stroke="#222" stroke-width=".8" stroke-linejoin="round"/></svg>
<div class="a" style="left:53.20px;top:267.0px;font-size:11.5px;line-height:20px;height:20px;letter-spacing:0.722px;color:#c80000;-webkit-text-stroke:0.12px #c80000;white-space:pre;">def start_parse_thread(frame)</div>
<svg class="a" style="left:34px;top:288px" width="13" height="16" viewBox="0 0 13 16"><defs><linearGradient id="fg15" x1="0" y1="0" x2="0" y2="1"><stop offset="0" stop-color="#fafafa"/><stop offset="1" stop-color="#d8d8d8"/></linearGradient></defs><path d="M1.6 .65 H9 L12.35 4 V14.4 Q12.35 15.35 11.4 15.35 H1.6 Q.65 15.35 .65 14.4 V1.6 Q.65 .65 1.6 .65 Z" fill="url(#fg15)" stroke="#000" stroke-width="1.3"/><path d="M8.6 1 V4.4 H12 Z" fill="#555" stroke="#222" stroke-width=".8" stroke-linejoin="round"/></svg>
<div class="a" style="left:53.20px;top:286.0px;font-size:11.5px;line-height:20px;height:20px;letter-spacing:0.727px;color:#c80000;-webkit-text-stroke:0.12px #c80000;white-space:pre;">def parse_thread(frame)</div>
<svg class="a" style="left:34px;top:307px" width="13" height="16" viewBox="0 0 13 16"><defs><linearGradient id="fg16" x1="0" y1="0" x2="0" y2="1"><stop offset="0" stop-color="#fafafa"/><stop offset="1" stop-color="#d8d8d8"/></linearGradient></defs><path d="M1.6 .65 H9 L12.35 4 V14.4 Q12.35 15.35 11.4 15.35 H1.6 Q.65 15.35 .65 14.4 V1.6 Q.65 .65 1.6 .65 Z" fill="url(#fg16)" stroke="#000" stroke-width="1.3"/><path d="M8.6 1 V4.4 H12 Z" fill="#555" stroke="#222" stroke-width=".8" stroke-linejoin="round"/></svg>
<div class="a" style="left:53.20px;top:305.0px;font-size:11.5px;line-height:20px;height:20px;letter-spacing:0.623px;color:#c80000;-webkit-text-stroke:0.12px #c80000;white-space:pre;">def my_excepthook(typ, inst, trace)</div>
<svg class="a" style="left:34px;top:326px" width="13" height="16" viewBox="0 0 13 16"><defs><linearGradient id="fg17" x1="0" y1="0" x2="0" y2="1"><stop offset="0" stop-color="#fafafa"/><stop offset="1" stop-color="#d8d8d8"/></linearGradient></defs><path d="M1.6 .65 H9 L12.35 4 V14.4 Q12.35 15.35 11.4 15.35 H1.6 Q.65 15.35 .65 14.4 V1.6 Q.65 .65 1.6 .65 Z" fill="url(#fg17)" stroke="#000" stroke-width="1.3"/><path d="M8.6 1 V4.4 H12 Z" fill="#555" stroke="#222" stroke-width=".8" stroke-linejoin="round"/></svg>
<div class="a" style="left:53.20px;top:324.0px;font-size:11.5px;line-height:20px;height:20px;letter-spacing:0.762px;color:#c80000;-webkit-text-stroke:0.12px #c80000;white-space:pre;">def veto(*args)</div>
<svg class="a" style="left:34px;top:347px" width="15" height="12" viewBox="0 0 15 12"><path d="M.7 10.6 V2 Q.7 .7 2 .7 H6 L7.5 2.2 H11.5 Q12.6 2.2 12.6 3.3 V5" fill="#9a9a86" stroke="#1a1a1a" stroke-width="1.3" stroke-linejoin="round"/><path d="M.9 11.3 L3.2 4.6 H14.3 L11.9 11.3 Z" fill="#cfd0ae" stroke="#1a1a1a" stroke-width="1.3" stroke-linejoin="round"/></svg>
<svg class="a" style="left:10px;top:346px" width="8" height="12" viewBox="0 0 8 12"><path d="M.8 .9 L5.8 5.5 L.8 10.1 Z" fill="#fff" stroke="#000" stroke-width="1.1" stroke-linejoin="miter"/></svg>
<div class="a" style="left:53.20px;top:343.0px;font-size:11.5px;line-height:20px;height:20px;letter-spacing:0.410px;color:#0000c8;-webkit-text-stroke:0.12px #0000c8;white-space:pre;">class MainWindow(wxFrame)</div>
<svg class="a" style="left:34px;top:366px" width="15" height="12" viewBox="0 0 15 12"><path d="M.7 10.6 V2 Q.7 .7 2 .7 H6 L7.5 2.2 H11.5 Q12.6 2.2 12.6 3.3 V5" fill="#9a9a86" stroke="#1a1a1a" stroke-width="1.3" stroke-linejoin="round"/><path d="M.9 11.3 L3.2 4.6 H14.3 L11.9 11.3 Z" fill="#cfd0ae" stroke="#1a1a1a" stroke-width="1.3" stroke-linejoin="round"/></svg>
<svg class="a" style="left:10px;top:365px" width="8" height="12" viewBox="0 0 8 12"><path d="M.8 .9 L5.8 5.5 L.8 10.1 Z" fill="#fff" stroke="#000" stroke-width="1.1" stroke-linejoin="miter"/></svg>
<div class="a" style="left:53.20px;top:362.0px;font-size:11.5px;line-height:20px;height:20px;letter-spacing:0.437px;color:#0000c8;-webkit-text-stroke:0.12px #0000c8;white-space:pre;">class PythonSTC(wxStyledTextCtrl)</div>
<svg class="a" style="left:34px;top:385px" width="15" height="12" viewBox="0 0 15 12"><path d="M.7 10.6 V2 Q.7 .7 2 .7 H6 L7.5 2.2 H11.5 Q12.6 2.2 12.6 3.3 V5" fill="#9a9a86" stroke="#1a1a1a" stroke-width="1.3" stroke-linejoin="round"/><path d="M.9 11.3 L3.2 4.6 H14.3 L11.9 11.3 Z" fill="#cfd0ae" stroke="#1a1a1a" stroke-width="1.3" stroke-linejoin="round"/></svg>
<svg class="a" style="left:10px;top:384px" width="8" height="12" viewBox="0 0 8 12"><path d="M.8 .9 L5.8 5.5 L.8 10.1 Z" fill="#fff" stroke="#000" stroke-width="1.1" stroke-linejoin="miter"/></svg>
<div class="a" style="left:53.20px;top:381.0px;font-size:11.5px;line-height:20px;height:20px;letter-spacing:0.445px;color:#0000c8;-webkit-text-stroke:0.12px #0000c8;white-space:pre;">class MyNB(wxNotebook)</div>
<svg class="a" style="left:34px;top:404px" width="15" height="12" viewBox="0 0 15 12"><path d="M.7 10.6 V2 Q.7 .7 2 .7 H6 L7.5 2.2 H11.5 Q12.6 2.2 12.6 3.3 V5" fill="#9a9a86" stroke="#1a1a1a" stroke-width="1.3" stroke-linejoin="round"/><path d="M.9 11.3 L3.2 4.6 H14.3 L11.9 11.3 Z" fill="#cfd0ae" stroke="#1a1a1a" stroke-width="1.3" stroke-linejoin="round"/></svg>
<svg class="a" style="left:10px;top:403px" width="8" height="12" viewBox="0 0 8 12"><path d="M.8 .9 L5.8 5.5 L.8 10.1 Z" fill="#fff" stroke="#000" stroke-width="1.1" stroke-linejoin="miter"/></svg>
<div class="a" style="left:53.20px;top:400.0px;font-size:11.5px;line-height:20px;height:20px;letter-spacing:0.374px;color:#0000c8;-webkit-text-stroke:0.12px #0000c8;white-space:pre;">class MyLC(wxTreeCtrl)</div>
<svg class="a" style="left:34px;top:423px" width="15" height="12" viewBox="0 0 15 12"><path d="M.7 10.6 V2 Q.7 .7 2 .7 H6 L7.5 2.2 H11.5 Q12.6 2.2 12.6 3.3 V5" fill="#9a9a86" stroke="#1a1a1a" stroke-width="1.3" stroke-linejoin="round"/><path d="M.9 11.3 L3.2 4.6 H14.3 L11.9 11.3 Z" fill="#cfd0ae" stroke="#1a1a1a" stroke-width="1.3" stroke-linejoin="round"/></svg>
<svg class="a" style="left:10px;top:422px" width="8" height="12" viewBox="0 0 8 12"><path d="M.8 .9 L5.8 5.5 L.8 10.1 Z" fill="#fff" stroke="#000" stroke-width="1.1" stroke-linejoin="miter"/></svg>
<div class="a" style="left:53.20px;top:419.0px;font-size:11.5px;line-height:20px;height:20px;letter-spacing:0.326px;color:#0000c8;-webkit-text-stroke:0.12px #0000c8;white-space:pre;">class FileDropTarget(wxFileDropTarget)</div>
<svg class="a" style="left:34px;top:442px" width="15" height="12" viewBox="0 0 15 12"><path d="M.7 10.6 V2 Q.7 .7 2 .7 H6 L7.5 2.2 H11.5 Q12.6 2.2 12.6 3.3 V5" fill="#9a9a86" stroke="#1a1a1a" stroke-width="1.3" stroke-linejoin="round"/><path d="M.9 11.3 L3.2 4.6 H14.3 L11.9 11.3 Z" fill="#cfd0ae" stroke="#1a1a1a" stroke-width="1.3" stroke-linejoin="round"/></svg>
<svg class="a" style="left:10px;top:441px" width="8" height="12" viewBox="0 0 8 12"><path d="M.8 .9 L5.8 5.5 L.8 10.1 Z" fill="#fff" stroke="#000" stroke-width="1.1" stroke-linejoin="miter"/></svg>
<div class="a" style="left:53.20px;top:438.0px;font-size:11.5px;line-height:20px;height:20px;letter-spacing:0.407px;color:#0000c8;-webkit-text-stroke:0.12px #0000c8;white-space:pre;">class TextDropTarget(wxTextDropTarget)</div>
<svg class="a" style="left:34px;top:461px" width="15" height="12" viewBox="0 0 15 12"><path d="M.7 10.6 V2 Q.7 .7 2 .7 H6 L7.5 2.2 H11.5 Q12.6 2.2 12.6 3.3 V5" fill="#9a9a86" stroke="#1a1a1a" stroke-width="1.3" stroke-linejoin="round"/><path d="M.9 11.3 L3.2 4.6 H14.3 L11.9 11.3 Z" fill="#cfd0ae" stroke="#1a1a1a" stroke-width="1.3" stroke-linejoin="round"/></svg>
<svg class="a" style="left:10px;top:460px" width="8" height="12" viewBox="0 0 8 12"><path d="M.8 .9 L5.8 5.5 L.8 10.1 Z" fill="#fff" stroke="#000" stroke-width="1.1" stroke-linejoin="miter"/></svg>
<div class="a" style="left:53.20px;top:457.0px;font-size:11.5px;line-height:20px;height:20px;letter-spacing:0.457px;color:#0000c8;-webkit-text-stroke:0.12px #0000c8;white-space:pre;">class SplitterWindow(wxSplitterWindow)</div>
</div>
<div class="a" style="left:998px;top:108px;width:15px;height:469px;background:#c8bcb0;border:1px solid #85766a;border-radius:4px"></div><div class="a" style="left:998px;top:122px;width:15px;height:404px;border:1px solid #85766a;background:linear-gradient(90deg,#ffffff,#f3f1ee 50%,#e9e6e2)"></div><div class="a" style="left:999px;top:128px;width:13px;height:392px;background:linear-gradient(90deg,#f3f1ee,#e6e2dd 55%,#dcd7d1);border-top:1px solid #dcd7d1;border-bottom:1px solid #dcd7d1"></div><div class="a" style="left:1002px;top:315px;width:2px;height:2px;background:#fdfcfc;box-shadow:-1px -1px 0 #dfdad4"></div><div class="a" style="left:1005px;top:315px;width:2px;height:2px;background:#fdfcfc;box-shadow:-1px -1px 0 #dfdad4"></div><div class="a" style="left:1008px;top:315px;width:2px;height:2px;background:#fdfcfc;box-shadow:-1px -1px 0 #dfdad4"></div><div class="a" style="left:1002px;top:318px;width:2px;height:2px;background:#fdfcfc;box-shadow:-1px -1px 0 #dfdad4"></div><div class="a" style="left:1005px;top:318px;width:2px;height:2px;background:#fdfcfc;box-shadow:-1px -1px 0 #dfdad4"></div><div class="a" style="left:1008px;top:318px;width:2px;height:2px;background:#fdfcfc;box-shadow:-1px -1px 0 #dfdad4"></div><div class="a" style="left:1002px;top:321px;width:2px;height:2px;background:#fdfcfc;box-shadow:-1px -1px 0 #dfdad4"></div><div class="a" style="left:1005px;top:321px;width:2px;height:2px;background:#fdfcfc;box-shadow:-1px -1px 0 #dfdad4"></div><div class="a" style="left:1008px;top:321px;width:2px;height:2px;background:#fdfcfc;box-shadow:-1px -1px 0 #dfdad4"></div><div class="a" style="left:1002px;top:324px;width:2px;height:2px;background:#fdfcfc;box-shadow:-1px -1px 0 #dfdad4"></div><div class="a" style="left:1005px;top:324px;width:2px;height:2px;background:#fdfcfc;box-shadow:-1px -1px 0 #dfdad4"></div><div class="a" style="left:1008px;top:324px;width:2px;height:2px;background:#fdfcfc;box-shadow:-1px -1px 0 #dfdad4"></div><div class="a" style="left:1002px;top:327px;width:2px;height:2px;background:#fdfcfc;box-shadow:-1px -1px 0 #dfdad4"></div><div class="a" style="left:1005px;top:327px;width:2px;height:2px;background:#fdfcfc;box-shadow:-1px -1px 0 #dfdad4"></div><div class="a" style="left:1008px;top:327px;width:2px;height:2px;background:#fdfcfc;box-shadow:-1px -1px 0 #dfdad4"></div><div class="a" style="left:1002px;top:330px;width:2px;height:2px;background:#fdfcfc;box-shadow:-1px -1px 0 #dfdad4"></div><div class="a" style="left:1005px;top:330px;width:2px;height:2px;background:#fdfcfc;box-shadow:-1px -1px 0 #dfdad4"></div><div class="a" style="left:1008px;top:330px;width:2px;height:2px;background:#fdfcfc;box-shadow:-1px -1px 0 #dfdad4"></div><div class="a" style="left:998px;top:108px;width:15px;height:15px;border:1px solid #85766a;border-radius:4px 4px 0 0;background:linear-gradient(90deg,#fbfaf9,#efece8 50%,#e4e0db)"><svg class="a" style="left:0;top:0" width="13" height="13" viewBox="0 0 13 13"><polygon points="3,8.2 10,8.2 6.5,4.2" fill="#000"/></svg></div><div class="a" style="left:998px;top:562px;width:15px;height:15px;border:1px solid #85766a;border-radius:0 0 4px 4px;background:linear-gradient(90deg,#fbfaf9,#efece8 50%,#e4e0db)"><svg class="a" style="left:0;top:0" width="13" height="13" viewBox="0 0 13 13"><polygon points="3,4.8 10,4.8 6.5,9" fill="#000"/></svg></div>
<div class="a" style="left:761px;top:577px;width:237px;height:15px;background:#c8bcb0;border:1px solid #85766a;border-radius:4px"></div><div class="a" style="left:775px;top:577px;width:102px;height:15px;border:1px solid #85766a;background:linear-gradient(#ffffff,#f3f1ee 50%,#e9e6e2)"></div><div class="a" style="left:781px;top:578px;width:90px;height:13px;background:linear-gradient(#f3f1ee,#e6e2dd 55%,#dcd7d1);border-left:1px solid #dcd7d1;border-right:1px solid #dcd7d1"></div><div class="a" style="left:817px;top:581px;width:2px;height:2px;background:#fdfcfc;box-shadow:-1px -1px 0 #dfdad4"></div><div class="a" style="left:820px;top:581px;width:2px;height:2px;background:#fdfcfc;box-shadow:-1px -1px 0 #dfdad4"></div><div class="a" style="left:823px;top:581px;width:2px;height:2px;background:#fdfcfc;box-shadow:-1px -1px 0 #dfdad4"></div><div class="a" style="left:826px;top:581px;width:2px;height:2px;background:#fdfcfc;box-shadow:-1px -1px 0 #dfdad4"></div><div class="a" style="left:829px;top:581px;width:2px;height:2px;background:#fdfcfc;box-shadow:-1px -1px 0 #dfdad4"></div><div class="a" style="left:832px;top:581px;width:2px;height:2px;background:#fdfcfc;box-shadow:-1px -1px 0 #dfdad4"></div><div class="a" style="left:817px;top:584px;width:2px;height:2px;background:#fdfcfc;box-shadow:-1px -1px 0 #dfdad4"></div><div class="a" style="left:820px;top:584px;width:2px;height:2px;background:#fdfcfc;box-shadow:-1px -1px 0 #dfdad4"></div><div class="a" style="left:823px;top:584px;width:2px;height:2px;background:#fdfcfc;box-shadow:-1px -1px 0 #dfdad4"></div><div class="a" style="left:826px;top:584px;width:2px;height:2px;background:#fdfcfc;box-shadow:-1px -1px 0 #dfdad4"></div><div class="a" style="left:829px;top:584px;width:2px;height:2px;background:#fdfcfc;box-shadow:-1px -1px 0 #dfdad4"></div><div class="a" style="left:832px;top:584px;width:2px;height:2px;background:#fdfcfc;box-shadow:-1px -1px 0 #dfdad4"></div><div class="a" style="left:817px;top:587px;width:2px;height:2px;background:#fdfcfc;box-shadow:-1px -1px 0 #dfdad4"></div><div class="a" style="left:820px;top:587px;width:2px;height:2px;background:#fdfcfc;box-shadow:-1px -1px 0 #dfdad4"></div><div class="a" style="left:823px;top:587px;width:2px;height:2px;background:#fdfcfc;box-shadow:-1px -1px 0 #dfdad4"></div><div class="a" style="left:826px;top:587px;width:2px;height:2px;background:#fdfcfc;box-shadow:-1px -1px 0 #dfdad4"></div><div class="a" style="left:829px;top:587px;width:2px;height:2px;background:#fdfcfc;box-shadow:-1px -1px 0 #dfdad4"></div><div class="a" style="left:832px;top:587px;width:2px;height:2px;background:#fdfcfc;box-shadow:-1px -1px 0 #dfdad4"></div><div class="a" style="left:761px;top:577px;width:15px;height:15px;border:1px solid #85766a;border-radius:4px 0 0 4px;background:linear-gradient(#fbfaf9,#efece8 50%,#e4e0db)"><svg class="a" style="left:0;top:0" width="13" height="13" viewBox="0 0 13 13"><polygon points="8.2,2.8 8.2,10.2 4,6.5" fill="#000"/></svg></div><div class="a" style="left:983px;top:577px;width:15px;height:15px;border:1px solid #85766a;border-radius:0 4px 4px 0;background:linear-gradient(#fbfaf9,#efece8 50%,#e4e0db)"><svg class="a" style="left:0;top:0" width="13" height="13" viewBox="0 0 13 13"><polygon points="4.8,2.8 4.8,10.2 9,6.5" fill="#000"/></svg></div>
<div class="a" style="left:7px;top:596px;width:852px;height:22px;border-top:1px solid #77736e;border-left:1px solid #77736e;border-right:1px solid #fff;border-bottom:1px solid #fff"></div>
<div class="a" style="left:862px;top:596px;width:92px;height:22px;border-top:1px solid #77736e;border-left:1px solid #77736e;border-right:1px solid #fff;border-bottom:1px solid #fff"></div>
<div class="a" style="left:957px;top:596px;width:57px;height:22px;border-top:1px solid #77736e;border-left:1px solid #77736e;border-right:1px solid #fff;border-bottom:1px solid #fff"></div>
<div class="a" style="left:865.10px;top:597.0px;font-size:11.5px;line-height:20px;height:20px;letter-spacing:0.303px;color:#000;-webkit-text-stroke:0.12px #000;white-space:pre;">L1 C0</div>
<div class="a" style="left:1010px;top:606px;width:1px;height:1px;background:#8c867f;box-shadow:1px 1px 0 #fff"></div>
<div class="a" style="left:1010px;top:609px;width:1px;height:1px;background:#8c867f;box-shadow:1px 1px 0 #fff"></div>
<div class="a" style="left:1007px;top:609px;width:1px;height:1px;background:#8c867f;box-shadow:1px 1px 0 #fff"></div>
<div class="a" style="left:1010px;top:612px;width:1px;height:1px;background:#8c867f;box-shadow:1px 1px 0 #fff"></div>
<div class="a" style="left:1007px;top:612px;width:1px;height:1px;background:#8c867f;box-shadow:1px 1px 0 #fff"></div>
<div class="a" style="left:1004px;top:612px;width:1px;height:1px;background:#8c867f;box-shadow:1px 1px 0 #fff"></div>
<div class="a" style="left:1010px;top:615px;width:1px;height:1px;background:#8c867f;box-shadow:1px 1px 0 #fff"></div>
<div class="a" style="left:1007px;top:615px;width:1px;height:1px;background:#8c867f;box-shadow:1px 1px 0 #fff"></div>
<div class="a" style="left:1004px;top:615px;width:1px;height:1px;background:#8c867f;box-shadow:1px 1px 0 #fff"></div>
<div class="a" style="left:1001px;top:615px;width:1px;height:1px;background:#8c867f;box-shadow:1px 1px 0 #fff"></div>
</div>
</body>
</html>
